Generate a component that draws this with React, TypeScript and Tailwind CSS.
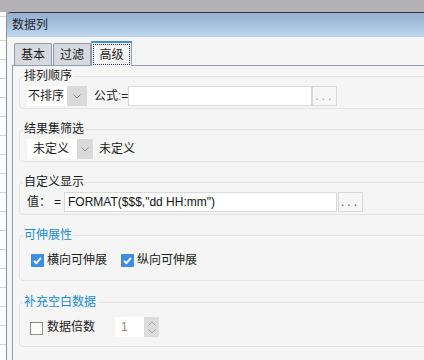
import React from 'react';

const Chevron: React.FC<{ up?: boolean; color?: string }> = ({ up, color = '#8c8c8c' }) => (
  <svg width="8" height="5" viewBox="0 0 8 5" className="block">
    <polyline
      points={up ? '0.5,4.5 4,1 7.5,4.5' : '0.5,0.5 4,4 7.5,0.5'}
      fill="none"
      stroke={color}
      strokeWidth="1"
    />
  </svg>
);

const CheckBox: React.FC<{ checked?: boolean; className?: string }> = ({ checked, className = '' }) =>
  checked ? (
    <div className={`w-[13px] h-[13px] shrink-0 rounded-[1px] bg-[#3b8ee3] flex items-center justify-center ${className}`}>
      <svg width="11" height="11" viewBox="0 0 11 11">
        <polyline points="2,5.8 4.4,8.2 9,2.8" fill="none" stroke="#ffffff" strokeWidth="1.9" />
      </svg>
    </div>
  ) : (
    <div className={`w-[13px] h-[13px] shrink-0 border border-[#8f8f8f] bg-[#fafafa] ${className}`} />
  );

interface GroupProps {
  title: string;
  blue?: boolean;
  className?: string;
  children: React.ReactNode;
}

const Group: React.FC<GroupProps> = ({ title, blue, className = '', children }) => (
  <fieldset className={`rounded-[4px] border border-[#e5e2e5] pl-[3px] pt-[1px] ${className}`}>
    <legend className={`px-[1px] leading-[17px] ${blue ? 'text-[#1b8bd6]' : 'text-[#1b1b1b]'}`}>{title}</legend>
    <div className="pl-[4px]">{children}</div>
  </fieldset>
);

const DotsButton: React.FC<{ color: string }> = ({ color }) => (
  <div
    className={`w-[25px] h-[20px] shrink-0 border border-[#d9d9d9] bg-[#f7f7f7] flex items-center justify-center leading-[20px] tracking-[3px] ${color}`}
  >
    ...
  </div>
);

const tabBase = 'h-[22px] shrink-0 border-t border-x border-[#8b9bb0] bg-[#d7d9df] rounded-t-[2px] flex items-center justify-center leading-[20px]';

const App: React.FC = () => {
  const rows = Array.from({ length: 17 }, (_, i) => i);

  return (
    <div className="w-[424px] h-[360px] overflow-hidden bg-[#b4b2b4] flex flex-col font-['Liberation_Sans','Noto_Sans_CJK_SC',sans-serif] text-[12px] text-[#1b1b1b]">
      <div className="h-[12px] shrink-0" />
      <div className="flex flex-1 min-h-0">
        {/* window behind the dialog */}
        <div className="w-[6px] shrink-0 bg-white flex flex-col">
          <div className="h-[5px] shrink-0 border-b border-[#d4d4d4]" />
          <div className="h-[24px] shrink-0 border-b border-[#d4d4d4]" />
          {rows.map((i) => (
            <div key={i} className="h-[19px] shrink-0 border-b border-[#d4d4d4]" />
          ))}
        </div>

        <div className="w-[600px] shrink-0 flex flex-col bg-[#f5f5f5] border-t border-l border-t-[#363636] border-l-[#8e8e8e] rounded-tl-[5px] overflow-hidden">
          <div className="h-[24px] shrink-0 bg-linear-to-b from-[#93afce] to-[#bfd6ef] pl-[5px] leading-[24px] text-[#1c2633]">
            数据列
          </div>

          {/* tabs */}
          <div className="h-[28px] shrink-0 flex items-end pl-[7px]">
            <div className={`${tabBase} w-[38px]`}>基本</div>
            <div className={`${tabBase} w-[38px] ml-[1px]`}>过滤</div>
            <div className="relative z-10 -mb-px w-[41px] h-[25px] shrink-0 border-t-2 border-t-[#3a8ee6] border-x border-x-[#8b9bb0] bg-[#f5f5f5] p-[1px] flex">
              <div className="flex-1 border border-dotted border-[#2b2b55] flex items-center justify-center leading-[18px]">
                高级
              </div>
            </div>
          </div>

          {/* panel */}
          <div className="flex-1 ml-[5px] border-t border-l border-[#8a9db3] pl-[6px]">
            <Group title="排列顺序" className="mt-[2px] pb-[2px]">
              <div className="flex items-center h-[20px]">
                <div className="flex h-[20px] shrink-0">
                  <div className="w-[40px] bg-white leading-[20px] pl-[1px]">不排序</div>
                  <div className="w-[20px] bg-[#dadada] flex items-center justify-center">
                    <Chevron />
                  </div>
                </div>
                <span className="ml-[7px] leading-[20px] shrink-0">
                  公式<span className="text-[#8a3d8a]">:</span>=
                </span>
                <div className="w-[184px] h-[20px] shrink-0 border border-[#d9d9d9] bg-white" />
                <DotsButton color="text-[#a3a3a3]" />
              </div>
            </Group>

            <Group title="结果集筛选" className="mt-[12px] pb-[2px]">
              <div className="flex items-center h-[20px]">
                <div className="flex h-[20px] shrink-0">
                  <div className="w-[50px] bg-white leading-[20px] pl-[6px]">未定义</div>
                  <div className="w-[16px] bg-[#dadada] flex items-center justify-center">
                    <Chevron />
                  </div>
                </div>
                <span className="ml-[6px] leading-[20px]">未定义</span>
              </div>
            </Group>

            <Group title="自定义显示" className="mt-[12px] pb-[2px]">
              <div className="flex items-center h-[20px]">
                <span className="leading-[20px]">值：</span>
                <span className="ml-[3px] leading-[20px]">=</span>
                <div className="ml-[3px] w-[273px] h-[20px] shrink-0 border border-[#d9d9d9] bg-white pl-[3px] leading-[18px] text-[#111111]">
                  FORMAT($$$,"dd HH:mm")
                </div>
                <div className="ml-[1px]">
                  <DotsButton color="text-[#7d3a7d]" />
                </div>
              </div>
            </Group>

            <Group title="可伸展性" blue className="mt-[12px] pb-[10px]">
              <div className="mt-[5px] flex items-center h-[20px]">
                <CheckBox checked className="ml-[4px]" />
                <span className="ml-[3px] leading-[20px]">横向可伸展</span>
                <CheckBox checked className="ml-[14px]" />
                <span className="ml-[3px] leading-[20px]">纵向可伸展</span>
              </div>
            </Group>

            <Group title="补充空白数据" blue className="mt-[13px] pb-[9px]">
              <div className="mt-[5px] flex items-center h-[20px]">
                <CheckBox className="ml-[3px] mt-[3px]" />
                <span className="ml-[4px] leading-[20px]">数据倍数</span>
                <div className="ml-[20px] flex h-[20px] shrink-0">
                  <div className="w-[29px] bg-white pl-[6px] leading-[20px] text-[#a08670]">1</div>
                  <div className="w-[15px] bg-[#dcdcdc] flex flex-col items-center justify-center gap-[3px]">
                    <Chevron up color="#a3a3a3" />
                    <Chevron color="#a3a3a3" />
                  </div>
                </div>
              </div>
            </Group>
          </div>
        </div>
      </div>
    </div>
  );
};

export default App;
